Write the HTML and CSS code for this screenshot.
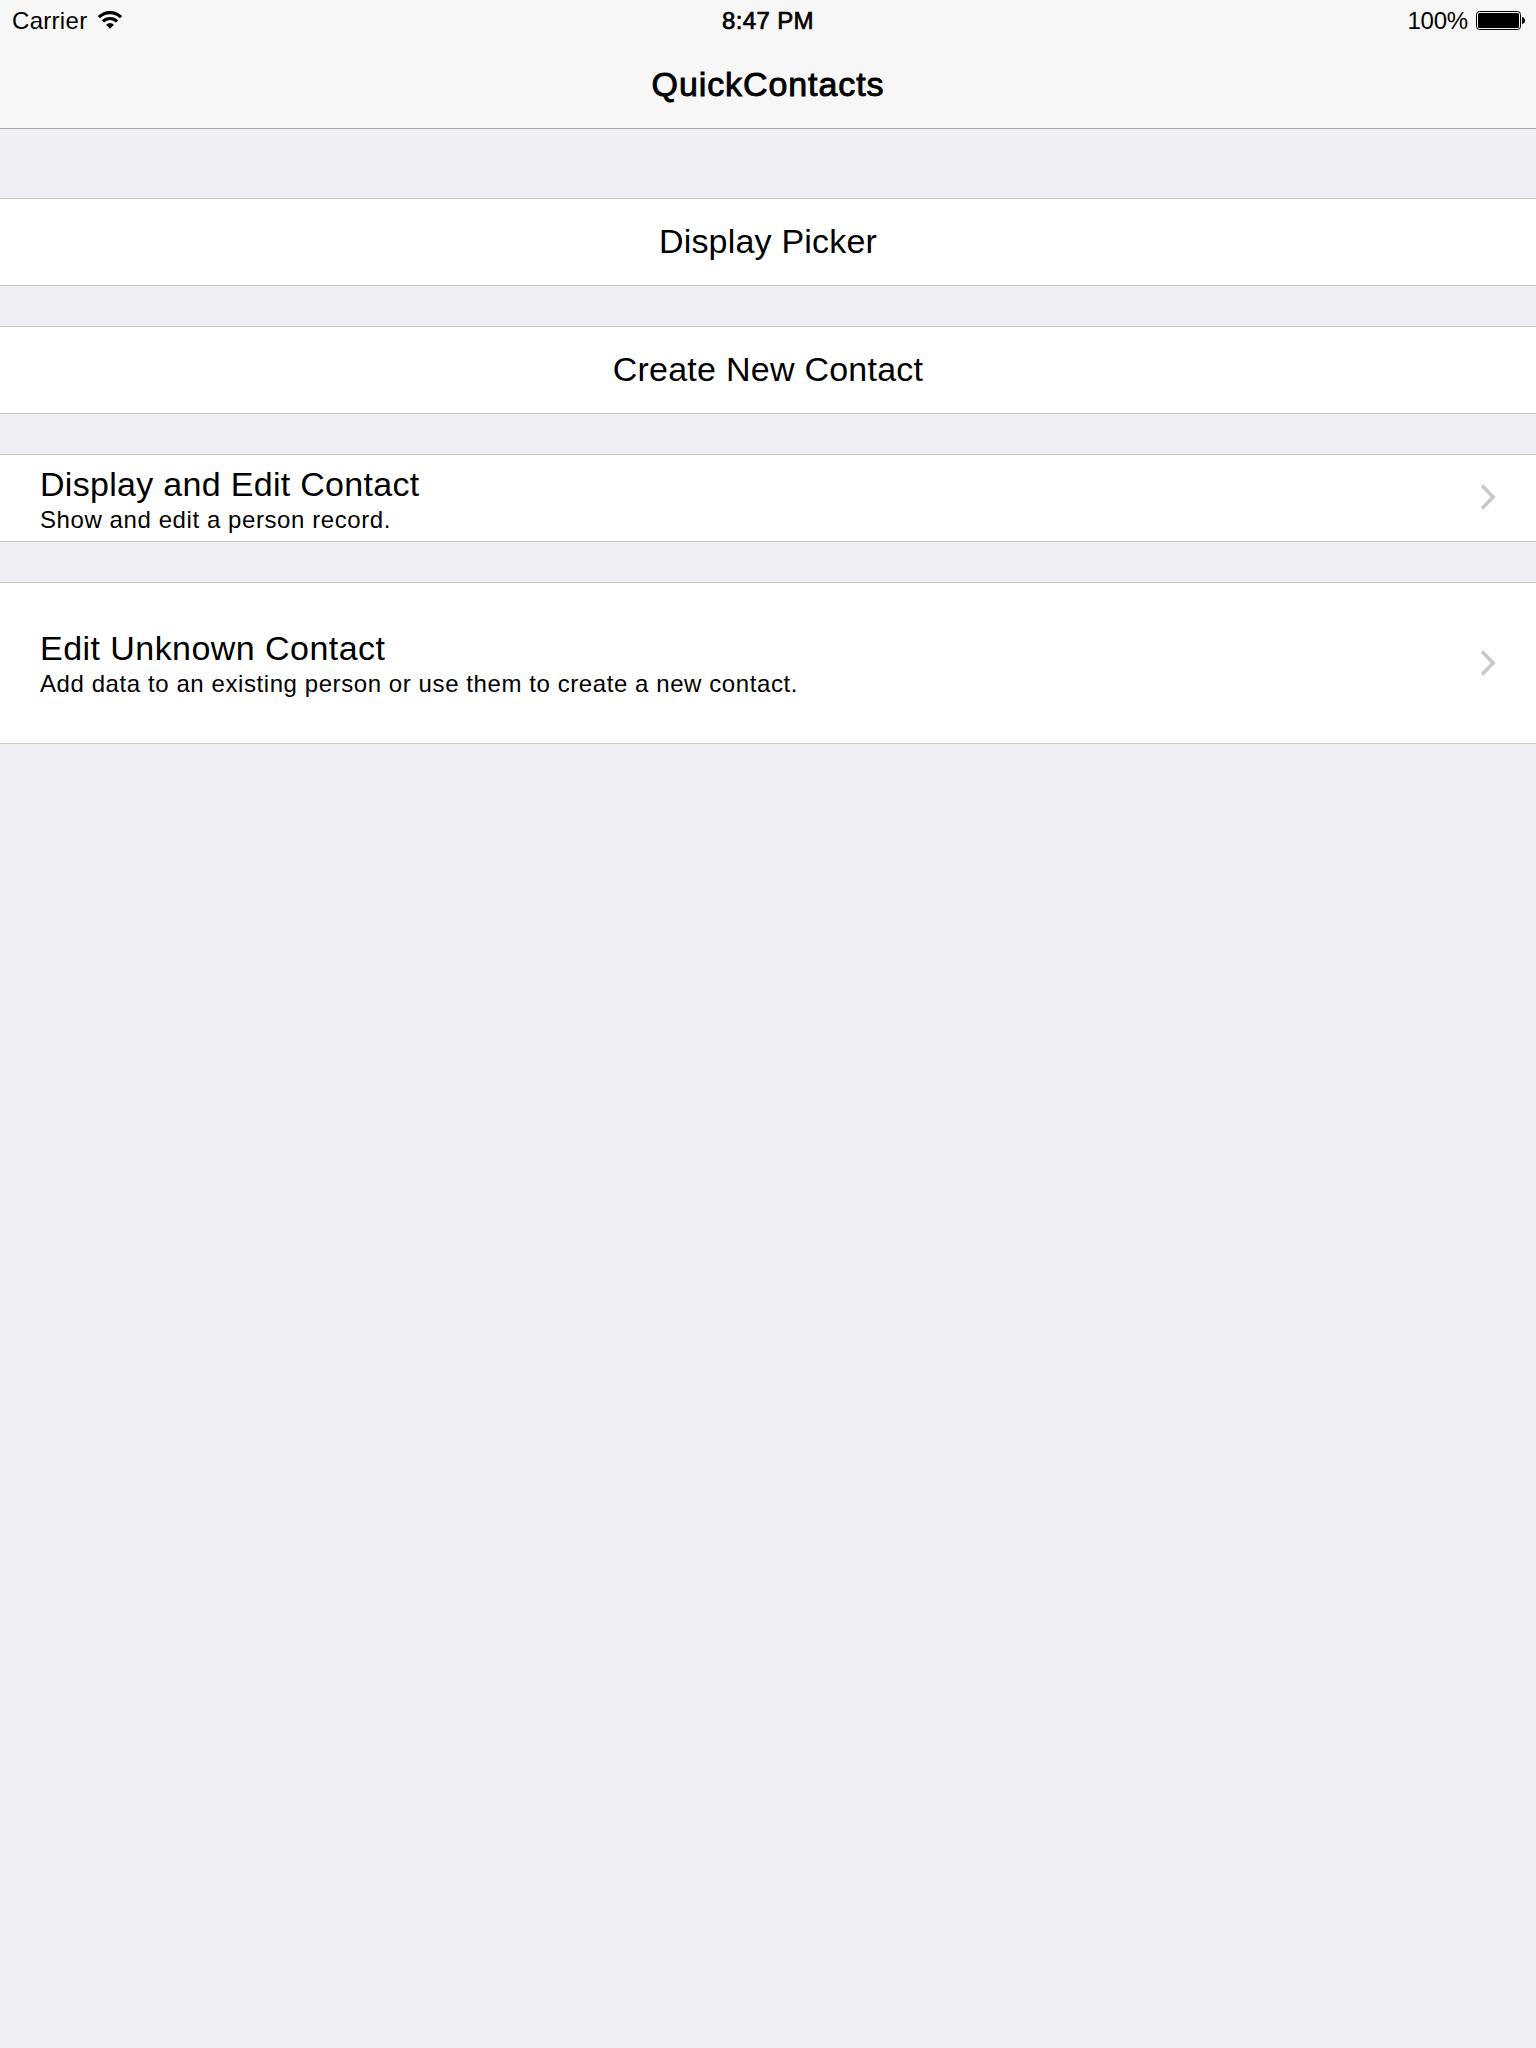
FILE: index.html
```html
<!DOCTYPE html>
<html lang="en">
<head>
<meta charset="utf-8">
<title>QuickContacts</title>
<link rel="stylesheet" href="styles.css">
</head>
<body>
<header class="header">
  <div class="status">
    <div class="status-left">
      <span class="carrier">Carrier</span>
      <svg class="wifi" width="26" height="20" viewBox="0 0 26 20">
        <path d="M1.9 7.2A15.6 15.6 0 0 1 24.1 7.2" fill="none" stroke="#000" stroke-width="3.2"/>
        <path d="M5.9 11.4A10 10 0 0 1 20.1 11.4" fill="none" stroke="#000" stroke-width="3.1"/>
        <path d="M9 14.7Q13 11.3 17 14.7L13 18.7Z"/>
      </svg>
    </div>
    <div class="clock">8:47 PM</div>
    <div class="status-right">
      <span class="percent">100%</span>
      <svg class="battery" width="50" height="20" viewBox="0 0 50 20">
        <rect x=".5" y=".5" width="44" height="18" rx="3" fill="none" stroke="#000"/>
        <rect x="2" y="2" width="41" height="15" rx="1.5"/>
        <path d="M46 6Q49 6.500 49 9.500Q49 12.500 46 13Z"/>
      </svg>
    </div>
  </div>
  <h1 class="title">QuickContacts</h1>
</header>
<main class="list">
  <div class="row action"><span class="label picker">Display Picker</span></div>
  <div class="row action"><span class="label create">Create New Contact</span></div>
  <div class="row detail">
    <div class="text">
      <div class="label display">Display and Edit Contact</div>
      <div class="sub">Show and edit a person record.</div>
    </div>
    <svg class="chevron" width="16" height="28" viewBox="0 0 16 28"><path d="M2 2.500L13.200 14L2 25.500" fill="none" stroke="#c7c7cc" stroke-width="3.500"/></svg>
  </div>
  <div class="row detail tall">
    <div class="text">
      <div class="label unknown">Edit Unknown Contact</div>
      <div class="sub">Add data to an existing person or use them to create a new contact.</div>
    </div>
    <svg class="chevron" width="16" height="28" viewBox="0 0 16 28"><path d="M2 2.500L13.200 14L2 25.500" fill="none" stroke="#c7c7cc" stroke-width="3.500"/></svg>
  </div>
</main>
</body>
</html>
```
FILE: styles.css
```css
* { box-sizing: border-box; }
body {
  margin: 0;
  min-height: 2048px;
  background: #efeff4;
  color: #000;
  font-family: "Liberation Sans", Arial, sans-serif;
}
.header {
  height: 129px;
  background: #f7f7f7;
  border-bottom: 1px solid #a7a7ab;
}
.status {
  display: grid;
  grid-template-columns: 1fr auto 1fr;
  height: 40px;
  padding: 0 10px 0 12px;
  font-size: 24px;
  line-height: 42px;
}
.status-left, .status-right { display: flex; align-items: flex-start; }
.status-right { justify-content: flex-end; }
.carrier { letter-spacing: .3px; }
.percent { letter-spacing: -.2px; }
.wifi { margin: 10px 0 0 10px; }
.battery { margin: 11px 0 0 8px; }
.clock {
  letter-spacing: .35px;
  margin-left: -2px;
  -webkit-text-stroke: .7px #000;
}
.title {
  margin: 0;
  font-size: 34px;
  font-weight: 400;
  line-height: 88px;
  text-align: center;
  letter-spacing: .9px;
  -webkit-text-stroke: .9px #000;
}
.list {
  display: flex;
  flex-direction: column;
  gap: 40px;
  padding-top: 69px;
}
.row {
  display: flex;
  align-items: center;
  justify-content: center;
  height: 88px;
  background: #fff;
  border: solid #c8c7cc;
  border-width: 1px 0;
}
.action { padding-bottom: 2px; }
.detail {
  justify-content: space-between;
  padding: 0 40px;
}
.tall { height: 162px; }
.text { padding-top: 4px; }
.tall .text { padding-top: 2px; }
.chevron { margin-bottom: 2px; }
.tall .chevron { margin-bottom: 0; }
.label { font-size: 34px; line-height: 40px; }
.sub { font-size: 24px; line-height: 32px; letter-spacing: .58px; }
.picker { letter-spacing: .2px; }
.create { letter-spacing: .25px; }
.display { letter-spacing: .3px; }
.unknown { letter-spacing: .45px; }
```
